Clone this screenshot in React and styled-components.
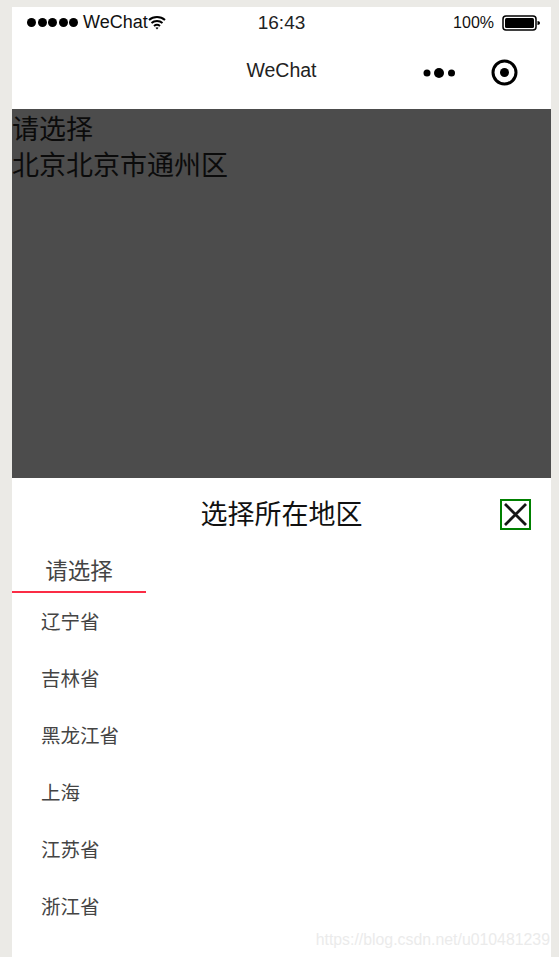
import styled, { createGlobalStyle } from 'styled-components';

const GlobalStyle = createGlobalStyle`
  html, body {
    margin: 0;
    padding: 0;
    height: 957px;
    overflow: hidden;
    background: #ebeae6;
    font-family: "Liberation Sans", "Noto Sans CJK SC", sans-serif;
  }
`;

const Phone = styled.div`
  position: relative;
  width: 539px;
  height: 950px;
  margin: 7px 0 0 12px;
  background: #fff;
  display: flex;
  flex-direction: column;
  overflow: hidden;
`;

const StatusBar = styled.div`
  height: 31px;
  display: grid;
  grid-template-columns: 1fr auto 1fr;
  align-items: center;
  padding: 0 11px 0 15px;
  font-size: 16px;
  color: #111;
`;

const Carrier = styled.div`
  display: flex;
  align-items: center;
`;

const CarrierName = styled.span`
  margin-left: 5px;
  font-size: 18px;
`;

const Signal = styled.div`
  display: flex;
  gap: 1.5px;
`;

const Dot = styled.span`
  width: 9px;
  height: 9px;
  border-radius: 50%;
  background: #000;
`;

const Clock = styled.div`
  font-size: 19px;
  color: #222;
  margin-right: 4px;
`;

const Battery = styled.div`
  justify-self: end;
  display: flex;
  align-items: center;
  gap: 8px;
`;

const NavBar = styled.div`
  height: 71px;
  display: flex;
  align-items: center;
  justify-content: center;
  position: relative;
  font-size: 19.5px;
  color: #222;
  padding-bottom: 7px;
  box-sizing: border-box;
`;

const NavActions = styled.div`
  position: absolute;
  right: 33px;
  top: 21px;
  display: flex;
  align-items: center;
  gap: 35px;
`;

const Overlay = styled.div`
  height: 369px;
  box-sizing: border-box;
  padding-top: 1px;
  background: #4c4c4c;
  color: #0b0b0b;
  font-size: 27px;
  line-height: 36px;
  font-family: "Noto Sans CJK SC", sans-serif;
`;

const Sheet = styled.div`
  flex: 1;
  background: #fff;
  font-family: "Noto Sans CJK SC", sans-serif;
`;

const SheetHeader = styled.div`
  height: 72px;
  box-sizing: border-box;
  padding-bottom: 3px;
  display: flex;
  align-items: center;
  justify-content: center;
  position: relative;
  font-size: 27px;
  color: #111;
`;

const CloseButton = styled.div`
  position: absolute;
  right: 20px;
  top: 21px;
  width: 31px;
  height: 31px;
  box-sizing: border-box;
  border: 2px solid #008000;
  display: flex;
  align-items: center;
  justify-content: center;
`;

const Tab = styled.div`
  width: 134px;
  height: 43px;
  box-sizing: border-box;
  border-bottom: 2px solid #fb2c45;
  text-align: center;
  font-size: 22.5px;
  line-height: 38px;
  color: #444;
`;

const RegionList = styled.div`
  display: flex;
  flex-direction: column;
`;

const Region = styled.div`
  height: 57px;
  padding-left: 29px;
  font-size: 19.5px;
  line-height: 56px;
  color: #444;
`;

const Watermark = styled.div`
  position: absolute;
  right: 1px;
  bottom: 8px;
  font-size: 15.85px;
  color: #ebebeb;
`;

const regions = ['辽宁省', '吉林省', '黑龙江省', '上海', '江苏省', '浙江省'];

function WifiIcon() {
  return (
    <svg width="18" height="15" viewBox="0 0 18 15" fill="none" stroke="#000" strokeWidth="2">
      <path d="M1 5c4.500-4 11.500-4 16 0" />
      <path d="M3.500 8c3-2.600 8-2.600 11 0" />
      <path d="M6 11c1.700-1.400 4.300-1.400 6 0" />
      <path d="M7.500 12.800 9 14.500l1.500-1.700c-.9-.7-2.100-.7-3 0z" fill="#000" stroke="none" />
    </svg>
  );
}

function BatteryIcon() {
  return (
    <svg width="38" height="16" viewBox="0 0 38 16">
      <rect x="1" y="1" width="33" height="14" rx="3" fill="#fff" stroke="#000" strokeWidth="1.500" />
      <rect x="3" y="3" width="29" height="10" rx="1.500" fill="#000" />
      <path d="M35.500 6c1.500 0 2.500.8 2.500 2s-1 2-2.500 2z" fill="#000" />
    </svg>
  );
}

function MoreIcon() {
  return (
    <svg width="33" height="12" viewBox="0 0 33 12" fill="#000">
      <circle cx="4" cy="6" r="3.500" />
      <circle cx="16" cy="6" r="5" />
      <circle cx="28.500" cy="6" r="3.500" />
    </svg>
  );
}

function RecordIcon() {
  return (
    <svg width="27" height="27" viewBox="0 0 27 27">
      <circle cx="13.500" cy="13.500" r="11.500" fill="none" stroke="#000" strokeWidth="3" />
      <circle cx="13.500" cy="13.500" r="4.500" fill="#000" />
    </svg>
  );
}

function CloseIcon() {
  return (
    <svg width="25" height="25" viewBox="0 0 25 25" stroke="#151515" strokeWidth="2.800">
      <path d="M2 2 23 23M23 2 2 23" />
    </svg>
  );
}

export default function App() {
  return (
    <>
      <GlobalStyle />
      <Phone>
        <StatusBar>
          <Carrier>
            <Signal>
              {[0, 1, 2, 3, 4].map((i) => (
                <Dot key={i} />
              ))}
            </Signal>
            <CarrierName>WeChat</CarrierName>
            <WifiIcon />
          </Carrier>
          <Clock>16:43</Clock>
          <Battery>
            <span>100%</span>
            <BatteryIcon />
          </Battery>
        </StatusBar>
        <NavBar>
          WeChat
          <NavActions>
            <MoreIcon />
            <RecordIcon />
          </NavActions>
        </NavBar>
        <Overlay>
          <div>请选择</div>
          <div>北京北京市通州区</div>
        </Overlay>
        <Sheet>
          <SheetHeader>
            选择所在地区
            <CloseButton>
              <CloseIcon />
            </CloseButton>
          </SheetHeader>
          <Tab>请选择</Tab>
          <RegionList>
            {regions.map((name) => (
              <Region key={name}>{name}</Region>
            ))}
          </RegionList>
        </Sheet>
        <Watermark>https://blog.csdn.net/u010481239</Watermark>
      </Phone>
    </>
  );
}
